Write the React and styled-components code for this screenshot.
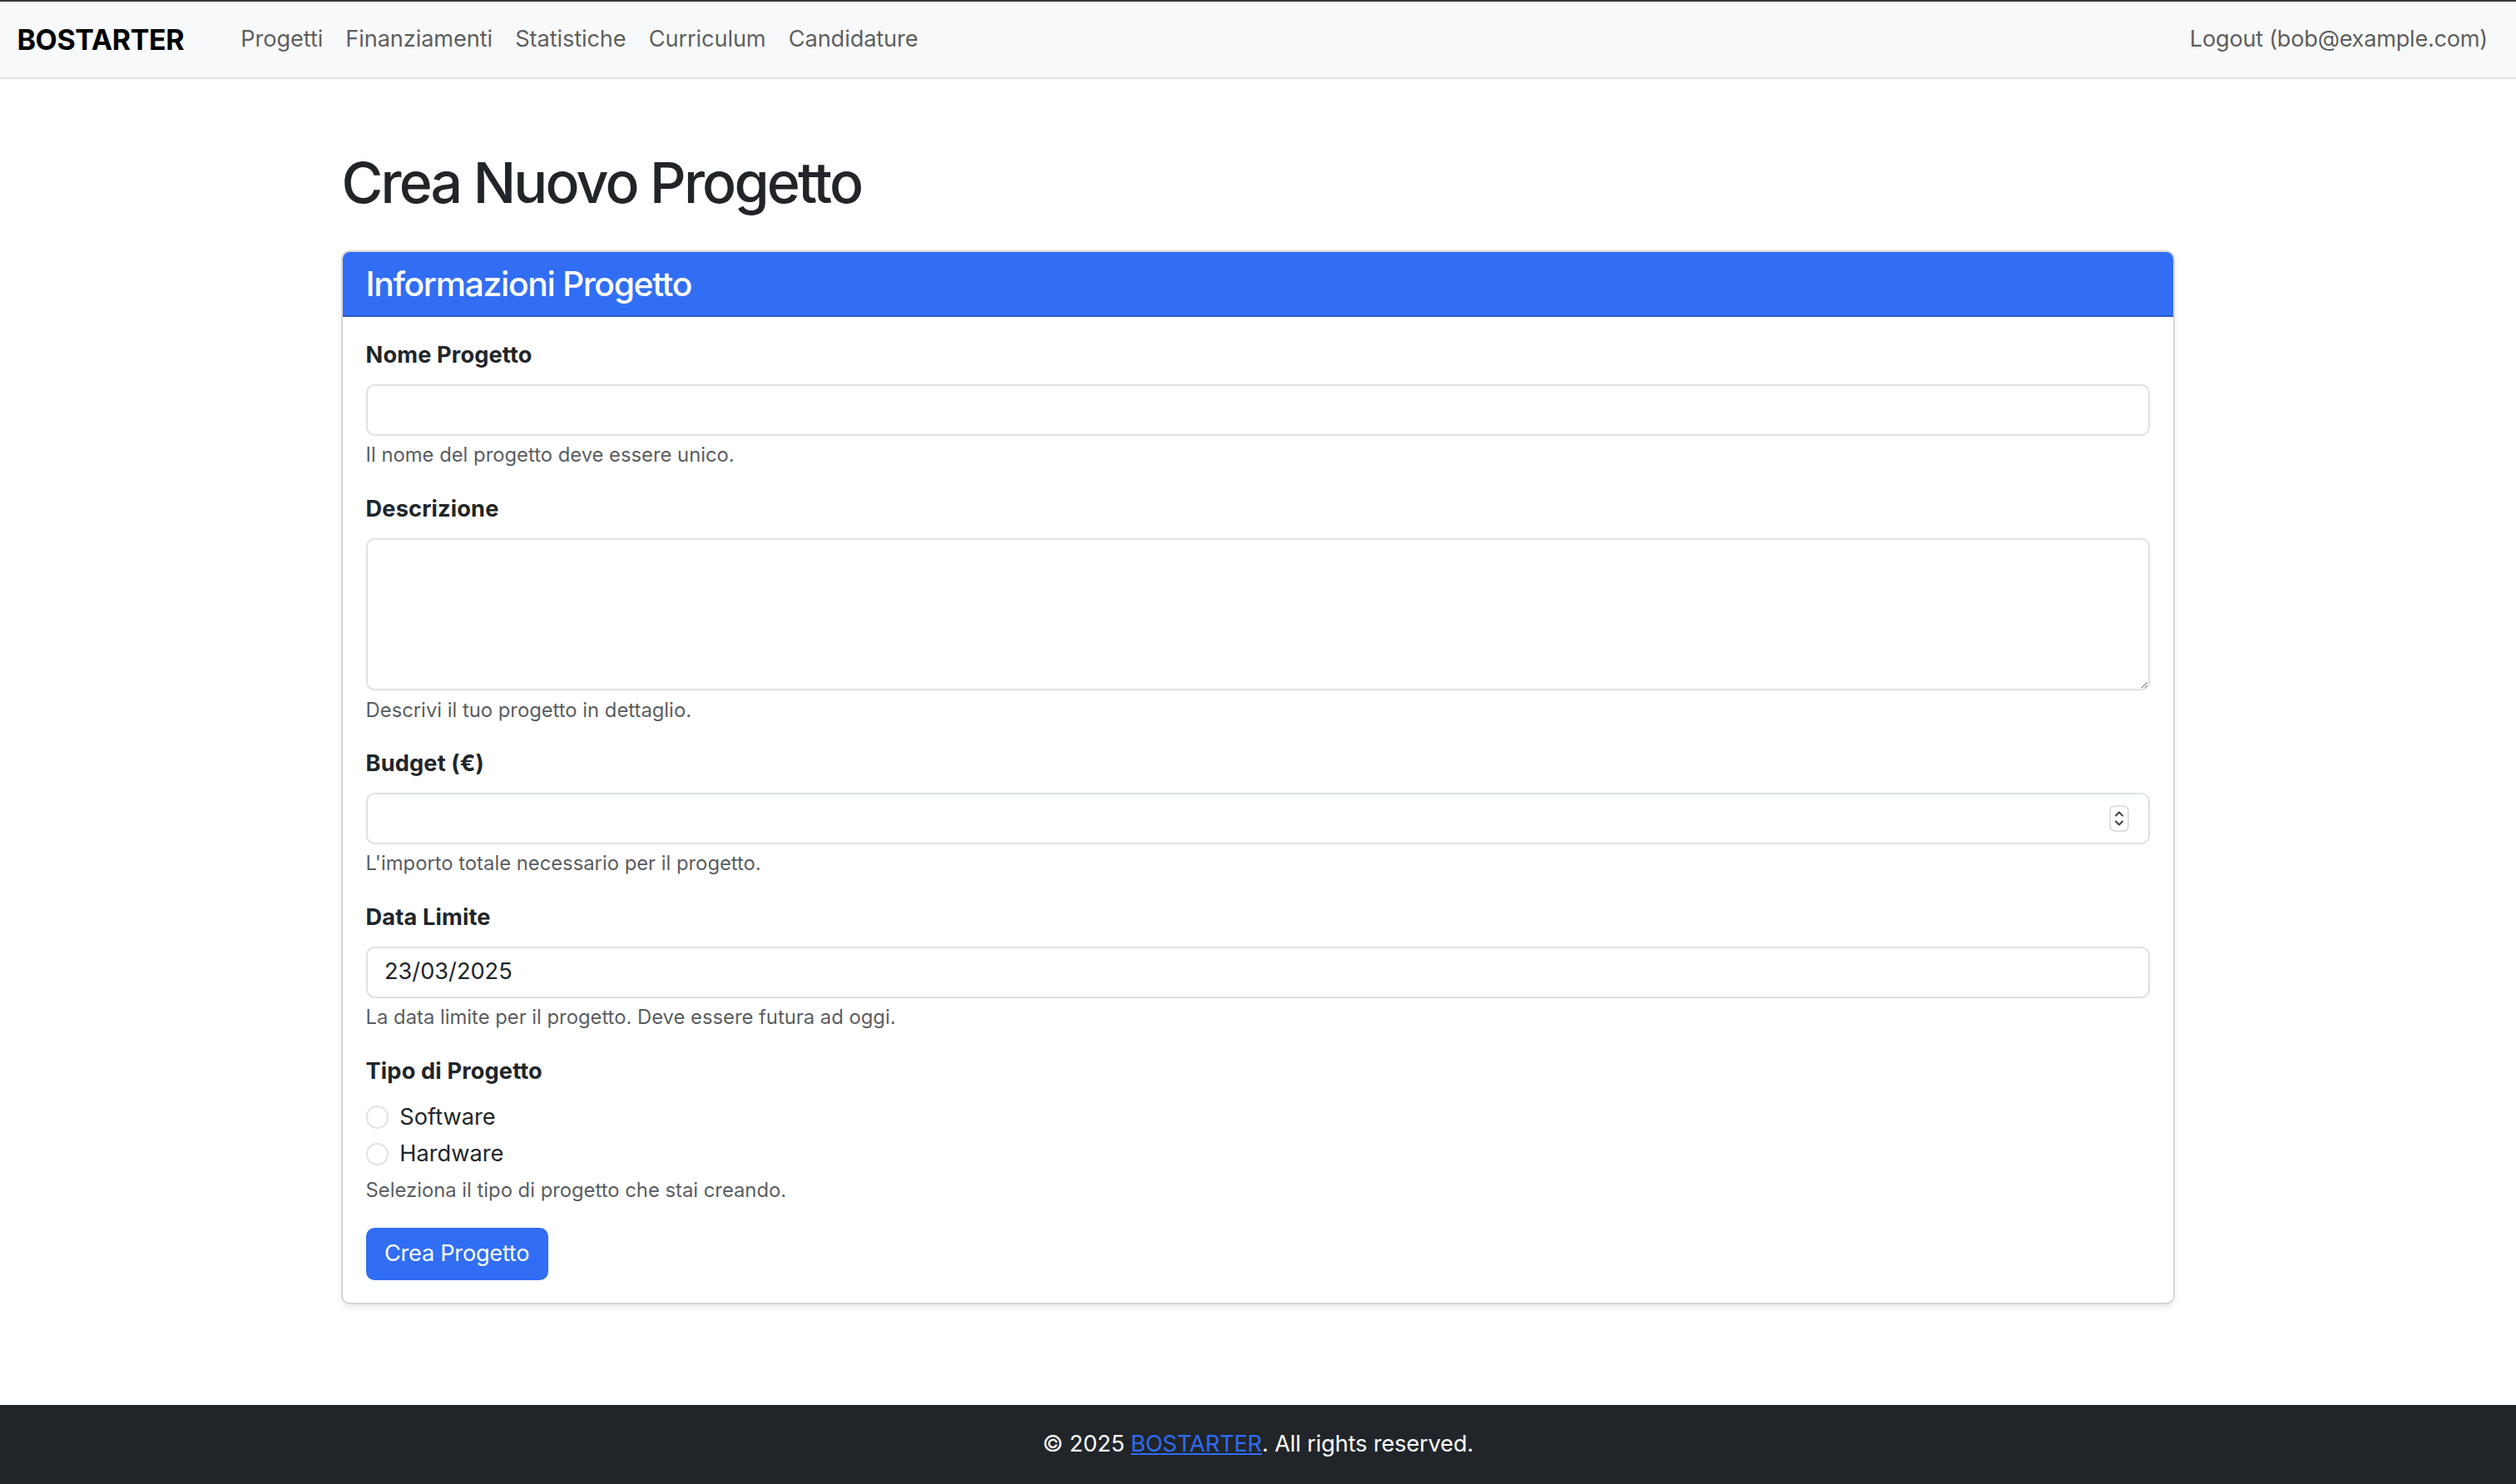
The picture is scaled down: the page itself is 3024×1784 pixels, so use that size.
import React, { useState } from 'react';
import styled, { createGlobalStyle } from 'styled-components';

const GlobalStyle = createGlobalStyle`
  html { font-size: 27.2px; }
  *, *::before, *::after { box-sizing: border-box; }
  body {
    margin: 0;
    font-family: Inter, "Noto Sans", "Liberation Sans", sans-serif;
    font-size: 1rem;
    line-height: 1.5;
    color: #212529;
    background: #fff;
  }
`;

const Page = styled.div`
  min-height: 100vh;
  display: flex;
  flex-direction: column;
`;

const Navbar = styled.nav`
  background: #f8f9fa;
  border-top: 2px solid #3a3a3c;
  border-bottom: 2px solid #e1e2e6;
  padding: 0.43rem 0;
`;

const NavInner = styled.div`
  display: flex;
  align-items: center;
  padding: 0 0.75rem;
`;

const Brand = styled.a`
  font-size: 1.25rem;
  font-weight: 700;
  color: #000;
  text-decoration: none;
  padding: 0.3125rem 0;
  margin-right: 2rem;
  letter-spacing: -0.01em;
`;

const NavList = styled.div`
  display: flex;
  align-items: center;
  flex: 1;
`;

const NavLink = styled.a`
  color: rgba(0, 0, 0, 0.65);
  text-decoration: none;
  padding: 0.5rem;
  letter-spacing: ${p => (p.$right ? '-0.01em' : '-0.004em')};
  margin-left: ${p => (p.$right ? 'auto' : '0')};
`;

const Main = styled.main`
  flex: 1;
  width: 100%;
  max-width: 82.5rem;
  margin: 3.07rem auto 3rem;
  padding: 0 0.75rem;
`;

const Title = styled.h1`
  font-size: 2.5rem;
  font-weight: 500;
  line-height: 1.2;
  margin: 0 0 1.5rem;
  letter-spacing: -0.041em;
`;

const Card = styled.div`
  border: 2px solid rgba(0, 0, 0, 0.16);
  border-radius: 0.375rem;
  box-shadow: 0 0.125rem 0.25rem rgba(0, 0, 0, 0.075);
  overflow: hidden;
`;

const CardHeader = styled.div`
  background: #316ef3;
  color: #fff;
  padding: 0.5rem 1rem;
  border-bottom: 2px solid #2a5bc9;
`;

const CardTitle = styled.h4`
  margin: 0;
  font-size: 1.5rem;
  font-weight: 500;
  line-height: 1.2;
  letter-spacing: -0.033em;
`;

const CardBody = styled.div`
  padding: 0.95rem 1rem 1rem;
`;

const Group = styled.div`
  margin-bottom: 1rem;
`;

const Label = styled.label`
  display: block;
  font-weight: 700;
  margin-bottom: 0.5rem;
  letter-spacing: 0.005em;
`;

const fieldCss = `
  display: block;
  width: 100%;
  padding: 0.32rem 0.75rem;
  font-family: inherit;
  font-size: 1rem;
  line-height: 1.5;
  color: #212529;
  background: #fff;
  border: 2px solid #dee2e6;
  border-radius: 0.375rem;
  outline: none;
`;

const Input = styled.input`
  ${fieldCss}
  appearance: none;
  &::-webkit-inner-spin-button,
  &::-webkit-outer-spin-button { -webkit-appearance: none; margin: 0; }
`;

const TextArea = styled.textarea`
  ${fieldCss}
  resize: vertical;
  height: 6.75rem;
`;

const NumberWrap = styled.div`
  position: relative;
`;

const Spinner = styled.svg`
  position: absolute;
  right: 25px;
  top: 50%;
  transform: translateY(-50%);
  width: 24px;
  height: 32px;
`;

const Help = styled.div`
  margin-top: 0.2rem;
  font-size: 0.875em;
  color: rgba(33, 37, 41, 0.75);
`;

const Check = styled.label`
  display: flex;
  align-items: center;
  gap: 0.5em;
  min-height: 1.5rem;
  margin-bottom: 0.125rem;
`;

const Radio = styled.input`
  appearance: none;
  flex-shrink: 0;
  font-size: 1rem;
  width: 1em;
  height: 1em;
  margin: 0;
  border: 2px solid #dee2e6;
  border-radius: 50%;
  background: #fff;
  &:checked {
    border: 0.3em solid #316ef3;
  }
`;

const Button = styled.button`
  font-family: inherit;
  font-size: 1rem;
  line-height: 1.5;
  padding: 0.34rem 0.75rem;
  color: #fff;
  background: #316ef3;
  border: 2px solid #316ef3;
  border-radius: 0.375rem;
  letter-spacing: -0.01em;
`;

const Footer = styled.footer`
  background: #212529;
  color: #fff;
  text-align: center;
  padding: 1rem 0;
  letter-spacing: -0.005em;
`;

const FooterLink = styled.a`
  color: #2f6df4;
  text-decoration: underline;
`;

const App = () => {
  const [form, setForm] = useState({ nome: '', descrizione: '', budget: '', data: '23/03/2025', tipo: '' });

  const handleChange = (e) => {
    const { name, value } = e.target;
    setForm({ ...form, [name]: value });
  };

  return (
    <Page>
      <GlobalStyle />
      <Navbar>
        <NavInner>
          <Brand href="#">BOSTARTER</Brand>
          <NavList>
            <NavLink href="#">Progetti</NavLink>
            <NavLink href="#">Finanziamenti</NavLink>
            <NavLink href="#">Statistiche</NavLink>
            <NavLink href="#">Curriculum</NavLink>
            <NavLink href="#">Candidature</NavLink>
            <NavLink href="#" $right>Logout (bob@example.com)</NavLink>
          </NavList>
        </NavInner>
      </Navbar>

      <Main>
        <Title>Crea Nuovo Progetto</Title>
        <Card>
          <CardHeader>
            <CardTitle>Informazioni Progetto</CardTitle>
          </CardHeader>
          <CardBody>
            <form onSubmit={(e) => e.preventDefault()}>
              <Group>
                <Label htmlFor="nome">Nome Progetto</Label>
                <Input id="nome" type="text" name="nome" value={form.nome} onChange={handleChange} />
                <Help>Il nome del progetto deve essere unico.</Help>
              </Group>

              <Group>
                <Label htmlFor="descrizione">Descrizione</Label>
                <TextArea id="descrizione" name="descrizione" value={form.descrizione} onChange={handleChange} />
                <Help>Descrivi il tuo progetto in dettaglio.</Help>
              </Group>

              <Group>
                <Label htmlFor="budget">Budget (€)</Label>
                <NumberWrap>
                  <Input id="budget" type="number" name="budget" value={form.budget} onChange={handleChange} />
                  <Spinner viewBox="0 0 24 32" fill="none">
                    <rect x="1" y="1" width="22" height="30" rx="6" stroke="#d4d6da" strokeWidth="1.5" />
                    <path d="M8 12.5 L12 8.5 L16 12.5" stroke="#3b3d40" strokeWidth="2" strokeLinecap="round" strokeLinejoin="round" />
                    <path d="M8 19.5 L12 23.5 L16 19.5" stroke="#3b3d40" strokeWidth="2" strokeLinecap="round" strokeLinejoin="round" />
                  </Spinner>
                </NumberWrap>
                <Help>L'importo totale necessario per il progetto.</Help>
              </Group>

              <Group>
                <Label htmlFor="data">Data Limite</Label>
                <Input id="data" type="text" name="data" value={form.data} onChange={handleChange} />
                <Help>La data limite per il progetto. Deve essere futura ad oggi.</Help>
              </Group>

              <Group>
                <Label as="div">Tipo di Progetto</Label>
                <Check>
                  <Radio type="radio" name="tipo" value="software" checked={form.tipo === 'software'} onChange={handleChange} />
                  Software
                </Check>
                <Check>
                  <Radio type="radio" name="tipo" value="hardware" checked={form.tipo === 'hardware'} onChange={handleChange} />
                  Hardware
                </Check>
                <Help>Seleziona il tipo di progetto che stai creando.</Help>
              </Group>

              <Button type="submit">Crea Progetto</Button>
            </form>
          </CardBody>
        </Card>
      </Main>

      <Footer>
        © 2025 <FooterLink href="#">BOSTARTER</FooterLink>. All rights reserved.
      </Footer>
    </Page>
  );
};

export default App;
